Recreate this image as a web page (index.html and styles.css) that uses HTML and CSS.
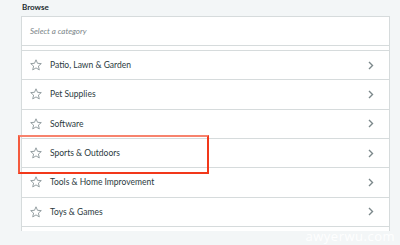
FILE: index.html
```html
<!DOCTYPE html>
<html lang="en">
<head>
    <meta charset="UTF-8">
    <meta name="viewport" content="width=device-width, initial-scale=1.0">
    <title>Browse</title>
    <link rel="stylesheet" href="styles.css">
</head>
<body>
    <div class="browse">
        <div class="label">Browse</div>
        <div class="panel">
            <div class="search">Select a category</div>
            <ul class="list">
                <li class="item">
                    <svg class="star" viewBox="0 0 12 12"><polygon points="6,0.8 7.5,4.3 11.3,4.6 8.4,7.1 9.3,10.9 6,8.9 2.7,10.9 3.6,7.1 0.7,4.6 4.5,4.3"/></svg>
                    <span class="name">Patio, Lawn &amp; Garden</span>
                    <svg class="chevron" viewBox="0 0 6 9"><polyline points="1,1 4.5,4.5 1,8"/></svg>
                </li>
                <li class="item">
                    <svg class="star" viewBox="0 0 12 12"><polygon points="6,0.8 7.5,4.3 11.3,4.6 8.4,7.1 9.3,10.9 6,8.9 2.7,10.9 3.6,7.1 0.7,4.6 4.5,4.3"/></svg>
                    <span class="name">Pet Supplies</span>
                    <svg class="chevron" viewBox="0 0 6 9"><polyline points="1,1 4.5,4.5 1,8"/></svg>
                </li>
                <li class="item">
                    <svg class="star" viewBox="0 0 12 12"><polygon points="6,0.8 7.5,4.3 11.3,4.6 8.4,7.1 9.3,10.9 6,8.9 2.7,10.9 3.6,7.1 0.7,4.6 4.5,4.3"/></svg>
                    <span class="name">Software</span>
                    <svg class="chevron" viewBox="0 0 6 9"><polyline points="1,1 4.5,4.5 1,8"/></svg>
                </li>
                <li class="item">
                    <svg class="star" viewBox="0 0 12 12"><polygon points="6,0.8 7.5,4.3 11.3,4.6 8.4,7.1 9.3,10.9 6,8.9 2.7,10.9 3.6,7.1 0.7,4.6 4.5,4.3"/></svg>
                    <span class="name">Sports &amp; Outdoors</span>
                    <svg class="chevron" viewBox="0 0 6 9"><polyline points="1,1 4.5,4.5 1,8"/></svg>
                </li>
                <li class="item">
                    <svg class="star" viewBox="0 0 12 12"><polygon points="6,0.8 7.5,4.3 11.3,4.6 8.4,7.1 9.3,10.9 6,8.9 2.7,10.9 3.6,7.1 0.7,4.6 4.5,4.3"/></svg>
                    <span class="name">Tools &amp; Home Improvement</span>
                    <svg class="chevron" viewBox="0 0 6 9"><polyline points="1,1 4.5,4.5 1,8"/></svg>
                </li>
                <li class="item">
                    <svg class="star" viewBox="0 0 12 12"><polygon points="6,0.8 7.5,4.3 11.3,4.6 8.4,7.1 9.3,10.9 6,8.9 2.7,10.9 3.6,7.1 0.7,4.6 4.5,4.3"/></svg>
                    <span class="name">Toys &amp; Games</span>
                    <svg class="chevron" viewBox="0 0 6 9"><polyline points="1,1 4.5,4.5 1,8"/></svg>
                </li>
            </ul>
        </div>
    </div>
    <div class="highlight"></div>
    <div class="watermark">awyerwu.com</div>
</body>
</html>
```

FILE: styles.css
```css
body {
    margin: 0;
    background: #f3f6f7;
    font-family: Lato, 'Open Sans', sans-serif;
    color: #2b3a3e;
    position: relative;
    height: 245px;
    overflow: hidden;
}

.browse {
    padding: 0 10px 0 21px;
}

.label {
    height: 16px;
    line-height: 14px;
    padding-left: 1px;
    font-size: 8px;
    font-weight: bold;
    color: #1d2b30;
}

.panel {
    background: #fff;
    border: 1px solid #d6dbdc;
    border-bottom: none;
    padding-bottom: 4px;
}

.search {
    height: 28px;
    line-height: 28px;
    padding-left: 8px;
    border-bottom: 1px solid #d6dbdc;
    font-size: 8px;
    font-style: italic;
    color: #7a8588;
}

.list {
    list-style: none;
    margin: 4px 0 0;
    padding: 0;
    border-top: 1px solid #d6dbdc;
}

.item {
    display: flex;
    align-items: center;
    height: 28.33px;
    padding: 0 15px 0 8px;
    border-bottom: 1px solid #d6dbdc;
    font-size: 8.5px;
}

.star {
    width: 12px;
    height: 12px;
    margin-right: 8px;
    fill: none;
    stroke: #8a9598;
    stroke-width: 0.9;
    stroke-linejoin: round;
}

.name {
    flex: 1;
}

.chevron {
    width: 6px;
    height: 9px;
    fill: none;
    stroke: #7c888b;
    stroke-width: 1.4;
}

/* annotation box over the Sports row */
.highlight {
    position: absolute;
    left: 18px;
    top: 135px;
    width: 187px;
    height: 35px;
    border: 2px solid #f2381a;
    border-top-color: #f7826d;
    border-left-color: #f45a3e;
}

.watermark {
    position: absolute;
    right: 5px;
    top: 227px;
    font-family: 'Open Sans', sans-serif;
    font-size: 13px;
    letter-spacing: 0.5px;
    color: rgba(255, 255, 255, 0.95);
}
```
